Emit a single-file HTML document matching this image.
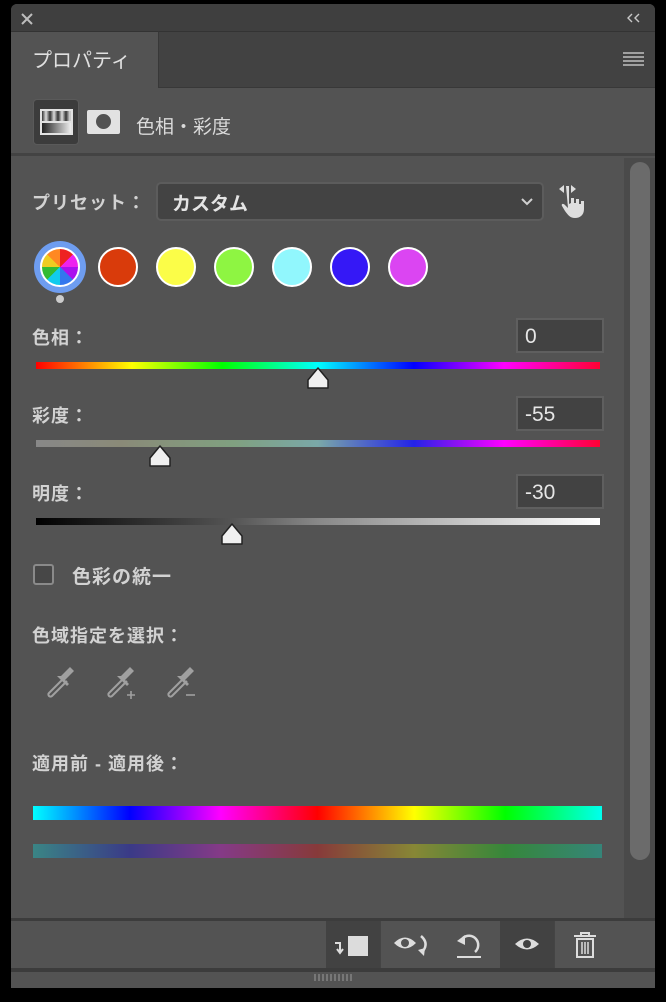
<!DOCTYPE html>
<html><head><meta charset="utf-8"><style>
*{margin:0;padding:0;box-sizing:border-box}
body{width:666px;height:1002px;background:#000;position:relative;overflow:hidden;font-family:"Liberation Sans","Noto Sans CJK JP",sans-serif;color:#dcdcdc}
.a{position:absolute}
.lbl{font-size:18px;font-weight:bold;color:#d2d2d2;letter-spacing:1px}
.inp{position:absolute;left:516px;width:88px;height:35px;background:#424242;border:2px solid #5f5f5f;font-size:21px;color:#e6e6e6;padding:5px 0 0 7px}
.bar{position:absolute;left:36px;width:564px;height:7px}
.sw{position:absolute;width:40px;height:40px;border-radius:50%;border:2px solid #fff;top:247px}
.th{position:absolute;width:26px;height:26px}
</style></head><body>
<div class="a" style="left:11px;top:4px;width:644px;height:984px;background:#535353;border-radius:6px 6px 0 0;overflow:hidden">
 <div class="a" style="left:0;top:0;width:644px;height:27px;background:#3f3f3f"></div>
 <div class="a" style="left:0;top:27px;width:644px;height:57px;background:#424242;border-top:1px solid #333;border-bottom:1px solid #383838"></div>
 <div class="a" style="left:0;top:27px;width:148px;height:57px;background:#535353;border-right:1px solid #383838;border-top:1px solid #333"></div>
 <div class="a" style="left:0;top:149px;width:644px;height:3px;background:#434343"></div>
 <div class="a" style="left:613px;top:154px;width:31px;height:760px;background:#4a4a4a"></div>
 <div class="a" style="left:619px;top:158px;width:20px;height:698px;background:#6b6b6b;border-radius:10px"></div>
 <div class="a" style="left:0;top:914px;width:644px;height:3px;background:#3c3c3c"></div>
 <div class="a" style="left:0;top:964px;width:644px;height:4px;background:#3c3c3c"></div>
 <div class="a" style="left:315px;top:917px;width:54px;height:47px;background:#424242"></div>
 <div class="a" style="left:369px;top:917px;width:1px;height:47px;background:#444"></div>
 <div class="a" style="left:489px;top:917px;width:54px;height:47px;background:#424242"></div>
 <div class="a" style="left:543px;top:917px;width:1px;height:47px;background:#444"></div>
</div>
<svg class="a" style="left:20px;top:12px" width="14" height="14"><path d="M2 2L12 12M12 2L2 12" stroke="#bdbdbd" stroke-width="2"/></svg>
<svg class="a" style="left:627px;top:13px" width="14" height="10"><path d="M5 1L1 5L5 9M12 1L8 5L12 9" stroke="#c8c8c8" stroke-width="1.4" fill="none"/></svg>
<svg class="a" style="left:623px;top:51px" width="21" height="15"><path d="M0 2H21M0 6H21M0 10H21M0 14H21" stroke="#c0c0c0" stroke-width="1.6"/></svg>
<div class="a" style="left:32px;top:44px;font-size:20px;color:#e0e0e0">プロパティ</div>
<div class="a" style="left:33px;top:99px;width:46px;height:46px;background:#3c3c3c;border:1px solid #5a5a5a;border-radius:4px"></div>
<div class="a" style="left:40px;top:109px;width:33px;height:26px;border:2px solid #e2e2e2;background:linear-gradient(90deg,#222,#eee)"></div>
<div class="a" style="left:42px;top:111px;width:29px;height:10px;background:repeating-linear-gradient(90deg,#333 0,#ddd 4px,#333 8px)"></div>
<div class="a" style="left:40px;top:121px;width:33px;height:2px;background:#e2e2e2"></div>
<div class="a" style="left:87px;top:110px;width:33px;height:24px;background:#e2e2e2;border-radius:2px"></div>
<div class="a" style="left:96px;top:114px;width:15px;height:15px;background:#535353;border-radius:50%"></div>
<div class="a" style="left:136px;top:112px;font-size:19px;color:#dadada">色相・彩度</div>
<div class="a lbl" style="left:32px;top:189px">プリセット：</div>
<div class="a" style="left:156px;top:182px;width:388px;height:39px;background:#434343;border:2px solid #5c5c5c;border-radius:5px"></div>
<div class="a" style="left:172px;top:189px;font-size:19px;font-weight:bold;color:#e4e4e4">カスタム</div>
<svg class="a" style="left:520px;top:197px" width="14" height="10"><path d="M2 2L7 7L12 2" stroke="#d0d0d0" stroke-width="2" fill="none"/></svg>
<svg class="a" style="left:556px;top:182px" width="34" height="38"><path d="M3 7L8 3V11Z M20 7L15 3V11Z" fill="#ddd"/><path d="M10 4h3v18l2-1v-5h3v5h2v-4h3v5h2v-3h3v8c0 6-4 9-9 9c-5 0-7-3-10-7l-3-5c-1-2 1-3 3-1l3 3z" fill="#dedede"/></svg>
<div class="a" style="left:34px;top:241px;width:52px;height:52px;border-radius:50%;background:#6e9df0"></div>
<div class="sw" style="left:40px;background:conic-gradient(#e22 0 45deg,#e2e 45deg 90deg,#a1e 90deg 135deg,#37e 135deg 180deg,#1ce 180deg 225deg,#3b3 225deg 270deg,#ec2 270deg 315deg,#f82 315deg 360deg)"></div>
<div class="a" style="left:56px;top:295px;width:8px;height:8px;border-radius:50%;background:#ccc"></div>
<div class="sw" style="left:98px;background:#d93b0b"></div>
<div class="sw" style="left:156px;background:#fbfd48"></div>
<div class="sw" style="left:214px;background:#8ef542"></div>
<div class="sw" style="left:272px;background:#91f7fd"></div>
<div class="sw" style="left:330px;background:#3518f6"></div>
<div class="sw" style="left:388px;background:#db45f2"></div>
<div class="a lbl" style="left:32px;top:324px">色相：</div>
<div class="inp" style="top:318px">0</div>
<div class="bar" style="top:362px;background:linear-gradient(90deg,#f00,#ff0 17%,#0f0 33%,#0ff 50%,#00f 67%,#f0f 83%,#f03)"></div>
<div class="a lbl" style="left:32px;top:402px">彩度：</div>
<div class="inp" style="top:396px">-55</div>
<div class="bar" style="top:440px;background:linear-gradient(90deg,#888,#8a8a78 15%,#80a080 35%,#7aa8a8 50%,#2323e8 67%,#f0f 83%,#f03)"></div>
<div class="a lbl" style="left:32px;top:480px">明度：</div>
<div class="inp" style="top:474px">-30</div>
<div class="bar" style="top:518px;background:linear-gradient(90deg,#000,#555 35%,#888 50%,#fff)"></div>
<svg class="th" style="left:305px;top:366px"><path d="M13 2L23 14V22H3V14Z" fill="#f0f0f0" stroke="#222" stroke-width="1.5" stroke-linejoin="round"/></svg>
<svg class="th" style="left:147px;top:444px"><path d="M13 2L23 14V22H3V14Z" fill="#f0f0f0" stroke="#222" stroke-width="1.5" stroke-linejoin="round"/></svg>
<svg class="th" style="left:219px;top:522px"><path d="M13 2L23 14V22H3V14Z" fill="#f0f0f0" stroke="#222" stroke-width="1.5" stroke-linejoin="round"/></svg>
<div class="a" style="left:33px;top:564px;width:21px;height:21px;border:2px solid #8a8a8a;border-radius:3px;background:#474747"></div>
<div class="a lbl" style="left:72px;top:562px;font-size:19px">色彩の統一</div>
<div class="a lbl" style="left:32px;top:622px">色域指定を選択：</div>
<svg class="a" style="left:44px;top:666px" width="160" height="36">
 <g fill="none" stroke="#a0a0a0" stroke-width="2"><path d="M20 12L5 27a2 2 0 0 0 3 3L23 15"/><path d="M80 12L65 27a2 2 0 0 0 3 3L83 15"/><path d="M140 12L125 27a2 2 0 0 0 3 3L143 15"/></g>
 <g fill="#a0a0a0"><path d="M17 10L22 5L26 1L30 5L26 9L21 14L25 18L23 20L13 10Z"/><path d="M77 10L82 5L86 1L90 5L86 9L81 14L85 18L83 20L73 10Z"/><path d="M137 10L142 5L146 1L150 5L146 9L141 14L145 18L143 20L133 10Z"/></g>
 <path d="M83 29H91M87 25V33" stroke="#a0a0a0" stroke-width="1.6"/><path d="M142 29H151" stroke="#a0a0a0" stroke-width="1.6"/>
</svg>
<div class="a lbl" style="left:32px;top:750px">適用前 - 適用後：</div>
<div class="a" style="left:33px;top:806px;width:569px;height:14px;background:linear-gradient(90deg,#0ff,#00f 17%,#f0f 33%,#f00 50%,#ff0 67%,#0f0 83%,#0fe)"></div>
<div class="a" style="left:33px;top:844px;width:569px;height:14px;background:linear-gradient(90deg,#3a8585,#3a3a87 17%,#853a87 33%,#873a3a 50%,#878736 67%,#36873a 83%,#358579)"></div>
<svg class="a" style="left:333px;top:934px" width="36" height="24"><path d="M2 9H7V18M4 15L7 19L10 15" stroke="#ddd" stroke-width="2" fill="none"/><rect x="15" y="2" width="20" height="20" fill="#dcdcdc"/></svg>
<svg class="a" style="left:392px;top:930px" width="40" height="30"><path d="M2 13Q13 2 24 13Q13 24 2 13Z" fill="#ddd"/><circle cx="13" cy="13" r="4" fill="#535353"/><path d="M29 6Q37 13 31 21" stroke="#ddd" stroke-width="2.5" fill="none"/><path d="M26 20L33 18L32 26Z" fill="#ddd"/></svg>
<svg class="a" style="left:454px;top:930px" width="30" height="30"><path d="M9 8A9 9 0 1 1 21 22" stroke="#ddd" stroke-width="2.5" fill="none"/><path d="M3 11L11 5V15Z" fill="#ddd"/><path d="M3 27H27" stroke="#ddd" stroke-width="2"/></svg>
<svg class="a" style="left:514px;top:934px" width="26" height="20"><path d="M1 10Q13 -1 25 10Q13 21 1 10Z" fill="#ddd"/><circle cx="13" cy="10" r="4" fill="#424242"/></svg>
<svg class="a" style="left:573px;top:931px" width="24" height="28"><path d="M1 5H23M8 5V2H16V5" stroke="#ddd" stroke-width="2" fill="none"/><rect x="4" y="8" width="16" height="18" fill="none" stroke="#ddd" stroke-width="2"/><path d="M9 11V23M12 11V23M15 11V23" stroke="#ddd" stroke-width="1.5"/></svg>
<div class="a" style="left:314px;top:974px;width:38px;height:7px;background:repeating-linear-gradient(90deg,#777 0 2px,transparent 2px 4px)"></div>
</body></html>
